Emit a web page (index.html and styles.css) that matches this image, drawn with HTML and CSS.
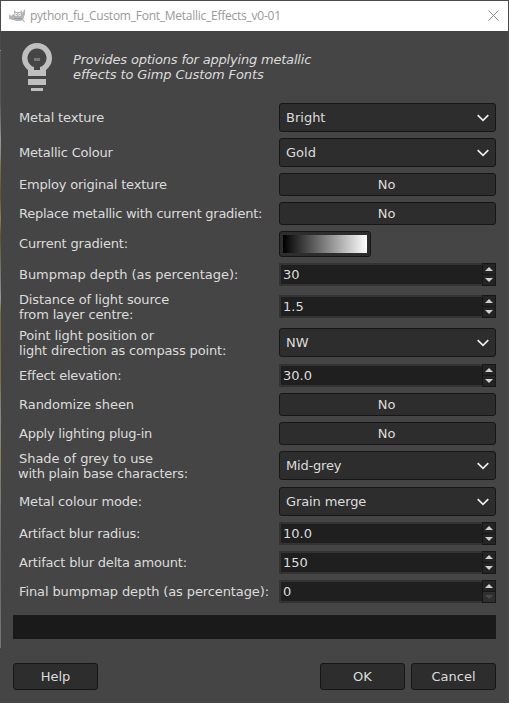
FILE: index.html
```
<!DOCTYPE html>
<html lang="en">
<head>
<meta charset="utf-8">
<title>python_fu_Custom_Font_Metallic_Effects_v0-01</title>
<link rel="stylesheet" href="styles.css">
</head>
<body>
<svg width="0" height="0" class="defs">
  <symbol id="chev" viewBox="0 0 12 8"><path d="M.7 1.2 6 6.3l5.3-5.1" fill="none" stroke="#eee" stroke-width="1.7"/></symbol>
  <symbol id="up" viewBox="0 0 8 4"><path d="M0 4 4 0l4 4z" fill="currentColor"/></symbol>
  <symbol id="down" viewBox="0 0 8 4"><path d="M0 0 4 4 8 0z" fill="currentColor"/></symbol>
</svg>
<div class="window">
  <header class="titlebar">
    <svg class="wilber" width="16" height="14" viewBox="0 0 16 14">
      <path d="M0 5l2 2 3-2 0-4 2 2 4 0 2-2 0 3 3-4 0 5-1 3-1 3-3 1-3 0-4-1-4-1-2-2z" fill="#b4b4b4"/>
      <circle cx="7" cy="5.5" r="1.4" fill="#fff"/><circle cx="10.7" cy="5.5" r="1.4" fill="#fff"/>
      <path d="M6.7 5h1v1h-1zM10.3 5h1v1h-1z" fill="#888"/>
      <path d="M5 9.5h7.500l3 3.500" stroke="#999" fill="none"/>
    </svg>
    <span class="title">python_fu_Custom_Font_Metallic_Effects_v0-01</span>
    <svg class="close" width="11" height="11" viewBox="0 0 11 11"><path d="M.5.5l10 10M10.5.5l-10 10" stroke="#888" fill="none"/></svg>
  </header>
  <section class="intro">
    <svg width="30" height="48" viewBox="0 0 30 48">
      <path fill="#bfbfbf" fill-rule="evenodd" d="M6 33V27A15 15 0 1 1 24 27V33zM12 27h6v-3a9.500 9.500 0 1 0-6 0z"/>
      <path fill="#bfbfbf" d="M6 36h18v6H6zM9 45h12v3H9z"/>
      <path fill="#777" d="M12 15h6v3h-6z"/>
    </svg>
    <p><span class="t4">Provides options for applying metallic</span><br><span class="t2">effects to Gimp Custom Fonts</span></p>
  </section>
  <main class="form">
    <label class="t3">Metal texture</label><div class="combo">Bright<svg><use href="#chev"/></svg></div>
    <label class="t4">Metallic Colour</label><div class="combo">Gold<svg><use href="#chev"/></svg></div>
    <label class="t4">Employ original texture</label><div class="toggle">No</div>
    <label class="t6">Replace metallic with current gradient:</label><div class="toggle">No</div>
    <label class="t4 raised">Current gradient:</label><div class="gradient"></div>
    <label class="t1">Bumpmap depth (as percentage):</label><div class="spin"><span>30</span><i><b><svg><use href="#up"/></svg></b><b><svg><use href="#down"/></svg></b></i></div>
    <label class="t3">Distance of light source<br>from layer centre:</label><div class="spin low"><span>1.5</span><i><b><svg><use href="#up"/></svg></b><b><svg><use href="#down"/></svg></b></i></div>
    <label class="t3">Point light position or<br>light direction as compass point:</label><div class="combo">NW<svg><use href="#chev"/></svg></div>
    <label class="t5">Effect elevation:</label><div class="spin"><span>30.0</span><i><b><svg><use href="#up"/></svg></b><b><svg><use href="#down"/></svg></b></i></div>
    <label class="t1">Randomize sheen</label><div class="toggle">No</div>
    <label class="t6">Apply lighting plug-in</label><div class="toggle">No</div>
    <label><span class="t1">Shade of grey to use</span><br><span class="t5 outdent">with plain base characters:</span></label><div class="combo t4">Mid-grey<svg><use href="#chev"/></svg></div>
    <label class="t3">Metal colour mode:</label><div class="combo t2">Grain merge<svg><use href="#chev"/></svg></div>
    <label class="t5">Artifact blur radius:</label><div class="spin"><span>10.0</span><i><b><svg><use href="#up"/></svg></b><b><svg><use href="#down"/></svg></b></i></div>
    <label class="t4">Artifact blur delta amount:</label><div class="spin"><span>150</span><i><b><svg><use href="#up"/></svg></b><b><svg><use href="#down"/></svg></b></i></div>
    <label class="t2">Final bumpmap depth (as percentage):</label><div class="spin"><span>0</span><i><b><svg><use href="#up"/></svg></b><b class="off"><svg><use href="#down"/></svg></b></i></div>
  </main>
  <div class="progress"></div>
  <footer><button class="help">Help</button><button>OK</button><button>Cancel</button></footer>
</div>
</body>
</html>
```

FILE: styles.css
```
* { box-sizing: border-box; }
body { margin: 0; background: #454545; font: 13px/15px "DejaVu Sans", sans-serif; color: #dcdcdc; }
.defs { display: block; height: 0; }
.window { width: 509px; height: 703px; border: 1px solid #4a4a4a; border-left-color: transparent; border-bottom: 0; overflow: hidden;
  background: linear-gradient(#4a4a4a 0 50px, #9a9a20 50px 51px, #555 51px 100px, #777 125px, #999 140px, #8a8a80 155px, #7a7440 165px, #5e5430 196px, #8a8250 219px, #5e5430 236px, #888 290px, #999 298px, #706838 315px, #77704a 370px, #7a7040 380px, #888 415px, #8a8258 454px, #777 504px, #666 570px, #777 648px, #222 649px, #454545 650px) border-box 0 0 / 1px 100% no-repeat; }
.titlebar { height: 30px; background: #fff; display: flex; align-items: center; padding: 0 9px 1px 8px; }
.title { font: 12px/16px "Open Sans", sans-serif; letter-spacing: -.25px; color: #999; margin: 1px 0 0 5px; flex: 1; white-space: nowrap; }
.intro { display: flex; height: 72px; padding: 12px 0 0 21px; font-style: italic; }
.intro p { margin: 9px 0 0 21px; white-space: nowrap; }
.t1 { letter-spacing: -.04px; }
.t2 { letter-spacing: -.11px; }
.t3 { letter-spacing: -.15px; }
.t4 { letter-spacing: -.19px; }
.t5 { letter-spacing: -.23px; }
.t6 { letter-spacing: -.26px; }
.form { display: grid; grid-template-columns: 260px 217px; row-gap: 6px; padding-left: 18px; grid-auto-rows: auto; }
.form label { align-self: center; white-space: nowrap; }
.form .raised { padding-bottom: 2px; }
.outdent { margin-left: -1px; }
.combo, .toggle, .gradient, button { background: #2d2d2d; border: 1px solid #161616; border-radius: 3px; }
.combo { height: 29px; display: flex; align-items: center; justify-content: space-between; padding: 0 6px; }
.combo svg { width: 12px; height: 8px; }
.toggle { height: 23px; line-height: 22px; text-align: center; padding-right: 2px; }
.gradient { width: 92px; height: 26px; padding: 3px; }
.gradient::before { content: ""; display: block; height: 18px; background: linear-gradient(90deg, #000, #fff); }
.spin { height: 23px; background: #1f1f1f; border: solid #333; border-width: 2px 0 2px 2px; display: flex; justify-content: space-between; line-height: 19px; padding-left: 2px; }
.spin.low { margin-top: 3px; }
.spin i { width: 14px; height: 23px; margin-top: -2px; display: grid; grid-template-rows: 12px 11px; }
.spin b { background: #242424; border: 1px solid #171717; display: flex; align-items: center; justify-content: center; color: #d0d0d0; }
.spin b:first-child { padding-bottom: 1px; }
.spin b + b { border-top: 0; }
.spin b svg { width: 8px; height: 4px; }
.spin .off { background: #303030; color: #4a4a4a; }
.progress { height: 24px; margin: 12px 12px 24px; background: #1a1a1a; }
footer { display: flex; gap: 6px; padding: 0 12px; }
button { width: 85px; height: 27px; padding: 0; font: inherit; color: inherit; }
.help { margin-right: auto; }
```
